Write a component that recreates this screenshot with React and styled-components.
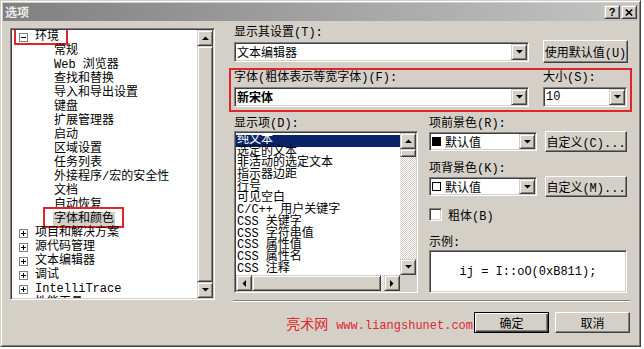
import React from 'react';
import styled, { createGlobalStyle, css } from 'styled-components';

const FACE = '#d4d0c8';
const MARK = '#e0252b';

const GlobalStyle = createGlobalStyle`
  html, body { margin: 0; padding: 0; background: #fff; }
  body {
    font-family: "Liberation Mono", "Noto Sans CJK SC", monospace;
    font-size: 12px;
    color: #000;
  }
  * { box-sizing: border-box; }
`;

const raised = css`
  background: ${FACE};
  border: 1px solid;
  border-color: #fff #404040 #404040 #fff;
  box-shadow: inset -1px -1px #808080;
`;

const scrollRaised = css`
  background: ${FACE};
  border: 1px solid;
  border-color: ${FACE} #404040 #404040 ${FACE};
  box-shadow: inset 1px 1px #fff, inset -1px -1px #808080;
`;

const sunken = css`
  background: #fff;
  border: 1px solid;
  border-color: #808080 #fff #fff #808080;
  box-shadow: inset 1px 1px #404040, inset -1px -1px ${FACE};
  padding: 1px;
`;

const Window = styled.div`
  width: 641px;
  height: 347px;
  background: ${FACE};
  border: 1px solid;
  border-color: ${FACE} #404040 #404040 ${FACE};
  box-shadow: inset 1px 1px #fff, inset -1px -1px #808080;
  padding: 2px;
  display: flex;
  flex-direction: column;
`;

const TitleBar = styled.div`
  height: 18px;
  display: flex;
  align-items: center;
  padding: 0 1px 0 2px;
  background: linear-gradient(to right, #808080, #c4c4c4);
`;

const TitleText = styled.div`
  font-family: "Noto Sans CJK SC", sans-serif;
  font-weight: bold;
  font-size: 12px;
  color: #ececec;
  line-height: 14px;
`;

const TitleButtons = styled.div`
  margin-left: auto;
  display: flex;
  gap: 1px;
`;

const TitleBtn = styled.div`
  ${scrollRaised};
  width: 16px;
  height: 14px;
  display: flex;
  align-items: center;
  justify-content: center;
  font-family: "Liberation Sans", sans-serif;
  font-weight: bold;
  font-size: 11px;
  line-height: 1;
`;

const Body = styled.div`
  display: grid;
  grid-template-columns: 205px 403px;
  column-gap: 14px;
  padding: 6px 0 0 7px;
`;

/* ---- tree ---- */
const TreeBox = styled.div`
  ${sunken};
  margin-top: 1px;
  width: 205px;
  height: 272px;
  display: flex;
`;

const TreeList = styled.div`
  flex: 1;
  overflow: hidden;
`;

const TreeRow = styled.div`
  position: relative;
  height: 14px;
  line-height: 14px;
  display: flex;
  align-items: center;
  white-space: nowrap;
  padding-left: ${p => (p.$child ? '41px' : '7px')};
`;

const ExpandBox = styled.span`
  position: relative;
  flex: none;
  width: 9px;
  height: 9px;
  border: 1px solid #808080;
  background: #fff;
  margin-right: 6px;
  &::before {
    content: '';
    position: absolute;
    left: 1px;
    right: 1px;
    top: 3px;
    height: 1px;
    background: #000;
  }
  &::after {
    content: '';
    display: ${p => (p.$open ? 'none' : 'block')};
    position: absolute;
    top: 1px;
    bottom: 1px;
    left: 3px;
    width: 1px;
    background: #000;
  }
`;

const NodeLabel = styled.span`
  position: relative;
  padding: 0 1px;
  background: ${p => (p.$selected ? FACE : 'transparent')};
`;

const EnvMark = styled.span`
  position: absolute;
  left: 2px;
  top: -2px;
  width: 54px;
  height: 17px;
  border: 2px solid ${MARK};
  pointer-events: none;
`;

const ItemMark = styled.span`
  position: absolute;
  left: -10px;
  top: -5px;
  width: 81px;
  height: 21px;
  border: 2px solid ${MARK};
  pointer-events: none;
`;

/* ---- scrollbars ---- */
const VScroll = styled.div`
  width: 16px;
  flex: none;
  display: flex;
  flex-direction: column;
`;

const HScroll = styled.div`
  height: 16px;
  display: flex;
`;

const ScrollBtn = styled.div`
  ${scrollRaised};
  width: 16px;
  height: 16px;
  flex: none;
  display: flex;
  align-items: center;
  justify-content: center;
`;

const Thumb = styled.div`
  ${scrollRaised};
  flex: ${p => (p.$grow ? '1' : 'none')};
  ${p => p.$size && css`
    height: ${p.$vertical ? `${p.$size}px` : 'auto'};
    width: ${p.$vertical ? 'auto' : `${p.$size}px`};
  `}
`;

const Track = styled.div`
  flex: 1;
  background: repeating-conic-gradient(${FACE} 0 25%, #fff 0 50%) 0 0 / 2px 2px;
`;

const Arrow = ({ dir }) => {
  const horiz = dir === 'left' || dir === 'right';
  const pts = {
    up: '0,4 7,4 3.5,0.5',
    down: '0,0 7,0 3.5,3.5',
    left: '4,0 4,7 0.5,3.5',
    right: '0,0 0,7 3.5,3.5',
  }[dir];
  return (
    <svg width={horiz ? 4 : 7} height={horiz ? 7 : 4} viewBox={horiz ? '0 0 4 7' : '0 0 7 4'}>
      <polygon points={pts} fill="#000" />
    </svg>
  );
};

/* ---- right side ---- */
const RightCol = styled.div`
  display: flex;
  flex-direction: column;
`;

const Label = styled.div`
  height: 13px;
  line-height: 13px;
  white-space: nowrap;
`;

const Section = styled.div`
  padding-left: 5px;
`;

const Row = styled.div`
  display: flex;
  align-items: center;
  height: ${p => p.$h || 21}px;
  gap: ${p => p.$gap || 8}px;
`;

const ComboBox = styled.div`
  ${sunken};
  width: ${p => p.$w}px;
  height: ${p => p.$h}px;
  flex: none;
  display: flex;
`;

const ComboValue = styled.div`
  flex: 1;
  display: flex;
  align-items: center;
  padding-left: 1px;
  white-space: nowrap;
  overflow: hidden;
  font-weight: ${p => (p.$bold ? 'bold' : 'normal')};
`;

const DropBtn = styled(ScrollBtn)`
  height: auto;
`;

const PushButton = styled.div`
  ${raised};
  width: ${p => p.$w}px;
  height: ${p => p.$h}px;
  flex: none;
  display: flex;
  align-items: center;
  justify-content: center;
  white-space: nowrap;
  ${p => p.$default && css`
    border: 1px solid #000;
    box-shadow: inset 1px 1px #fff, inset -1px -1px #404040, inset -2px -2px #808080;
  `}
`;

const RedBox = styled.div`
  margin-top: 5px;
  border: 2px solid ${MARK};
  padding: 2px 3px 3px 3px;
  display: flex;
  gap: 14px;
`;

const FieldCol = styled.div`
  width: ${p => p.$w}px;
  display: flex;
  flex-direction: column;
  gap: 2px;
`;

const Lower = styled.div`
  margin-top: 6px;
  padding-left: 5px;
  display: flex;
  gap: 11px;
`;

const ListCol = styled.div`
  width: 184px;
`;

const ListBox = styled.div`
  ${sunken};
  height: 162px;
  display: grid;
  grid-template-columns: 1fr 16px;
  grid-template-rows: 1fr 16px;
`;

const ListItems = styled.div`
  overflow: hidden;
  padding-top: 2px;
`;

const ListItem = styled.div`
  height: 11.7px;
  line-height: 11.7px;
  padding-left: 1px;
  white-space: nowrap;
  background: ${p => (p.$selected ? '#0a246a' : 'transparent')};
  color: ${p => (p.$selected ? '#fff' : '#000')};
`;

const Corner = styled.div`
  background: ${FACE};
`;

const SideCol = styled.div`
  width: 198px;
  display: flex;
  flex-direction: column;
`;

const Gap = styled.div`
  height: ${p => p.$h}px;
  flex: none;
`;

const Swatch = styled.span`
  flex: none;
  width: 9px;
  height: 9px;
  border: 1px solid #000;
  background: ${p => p.$fill};
  margin-right: 4px;
`;

const CheckRow = styled.div`
  display: flex;
  align-items: center;
  height: 13px;
`;

const CheckBox = styled.span`
  ${sunken};
  width: 13px;
  height: 13px;
  margin-right: 6px;
`;

const SampleBox = styled.div`
  ${sunken};
  height: 43px;
  display: flex;
  align-items: center;
  justify-content: center;
  white-space: pre;
`;

const Separator = styled.div`
  margin: 7px 2px 0 4px;
  height: 2px;
  border-top: 1px solid #808080;
  border-bottom: 1px solid #fff;
`;

const Footer = styled.div`
  grid-column: 1 / -1;
  margin-top: 10px;
  padding-right: 2px;
  display: flex;
  align-items: center;
  justify-content: flex-end;
`;

const Watermark = styled.div`
  color: #e3262b;
  display: flex;
  align-items: baseline;
  margin-right: 1px;
  white-space: nowrap;
`;

const WmCn = styled.span`
  font-family: "Noto Sans CJK SC", sans-serif;
  font-size: 14px;
  margin-right: 8px;
`;

const WmUrl = styled.span`
  font-family: "Liberation Mono", monospace;
  font-size: 12px;
`;

const Buttons = styled.div`
  display: flex;
  gap: 6px;
`;

const envChildren = [
  '常规', 'Web 浏览器', '查找和替换', '导入和导出设置', '键盘', '扩展管理器', '启动',
  '区域设置', '任务列表', '外接程序/宏的安全性', '文档', '自动恢复', '字体和颜色',
];
const topItems = ['项目和解决方案', '源代码管理', '文本编辑器', '调试', 'IntelliTrace', '性能工具'];
const displayItems = [
  '纯文本', '选定的文本', '非活动的选定文本', '指示器边距', '行号', '可见空白',
  'C/C++ 用户关键字', 'CSS 关键字', 'CSS 字符串值', 'CSS 属性值', 'CSS 属性名', 'CSS 注释',
];

const Combo = ({ w, h, bold, children }) => (
  <ComboBox $w={w} $h={h}>
    <ComboValue $bold={bold}>{children}</ComboValue>
    <DropBtn><Arrow dir="down" /></DropBtn>
  </ComboBox>
);

const App = () => (
  <>
    <GlobalStyle />
    <Window>
      <TitleBar>
        <TitleText>选项</TitleText>
        <TitleButtons>
          <TitleBtn>?</TitleBtn>
          <TitleBtn>
            <svg width="8" height="7" viewBox="0 0 8 7">
              <path d="M0.8 0.5 L7.2 6.5 M7.2 0.5 L0.8 6.5" stroke="#000" strokeWidth="1.6" />
            </svg>
          </TitleBtn>
        </TitleButtons>
      </TitleBar>

      <Body>
        <TreeBox>
          <TreeList>
            <TreeRow>
              <EnvMark />
              <ExpandBox $open />
              <NodeLabel>环境</NodeLabel>
            </TreeRow>
            {envChildren.map((c, i) => (
              <TreeRow $child key={c}>
                <NodeLabel $selected={i === envChildren.length - 1}>
                  {c}
                  {i === envChildren.length - 1 && <ItemMark />}
                </NodeLabel>
              </TreeRow>
            ))}
            {topItems.map(t => (
              <TreeRow key={t}>
                <ExpandBox />
                <NodeLabel>{t}</NodeLabel>
              </TreeRow>
            ))}
          </TreeList>
          <VScroll>
            <ScrollBtn><Arrow dir="up" /></ScrollBtn>
            <Thumb $grow />
            <ScrollBtn><Arrow dir="down" /></ScrollBtn>
          </VScroll>
        </TreeBox>

        <RightCol>
          <Section>
            <Label>显示其设置(T):</Label>
            <Row $h={23} $gap={14}>
              <Combo w={295} h={20}>文本编辑器</Combo>
              <PushButton $w={85} $h={23}>使用默认值(U)</PushButton>
            </Row>
          </Section>

          <RedBox>
            <FieldCol $w={295}>
              <Label>字体(粗体表示等宽字体)(F):</Label>
              <Combo w={295} h={20} bold>新宋体</Combo>
            </FieldCol>
            <FieldCol $w={84}>
              <Label>大小(S):</Label>
              <Combo w={84} h={20}>10</Combo>
            </FieldCol>
          </RedBox>

          <Lower>
            <ListCol>
              <Label>显示项(D):</Label>
              <ListBox>
                <ListItems>
                  {displayItems.map((d, i) => (
                    <ListItem key={d} $selected={i === 0}>{d}</ListItem>
                  ))}
                </ListItems>
                <VScroll>
                  <ScrollBtn><Arrow dir="up" /></ScrollBtn>
                  <Thumb $vertical $size={8} />
                  <Track />
                  <ScrollBtn><Arrow dir="down" /></ScrollBtn>
                </VScroll>
                <HScroll>
                  <ScrollBtn><Arrow dir="left" /></ScrollBtn>
                  <Thumb $size={129} />
                  <Track />
                  <ScrollBtn><Arrow dir="right" /></ScrollBtn>
                </HScroll>
                <Corner />
              </ListBox>
            </ListCol>

            <SideCol>
              <Label>项前景色(R):</Label>
              <Row>
                <Combo w={108} h={19}><Swatch $fill="#000" />默认值</Combo>
                <PushButton $w={82} $h={21}>自定义(C)...</PushButton>
              </Row>
              <Gap $h={11} />
              <Label>项背景色(K):</Label>
              <Row>
                <Combo w={108} h={19}><Swatch $fill="#fff" />默认值</Combo>
                <PushButton $w={82} $h={21}>自定义(M)...</PushButton>
              </Row>
              <Gap $h={11} />
              <CheckRow>
                <CheckBox />
                粗体(B)
              </CheckRow>
              <Gap $h={16} />
              <Label>示例:</Label>
              <SampleBox>ij = I::oO(0xB811);</SampleBox>
            </SideCol>
          </Lower>

          <Separator />
        </RightCol>

        <Footer>
          <Watermark>
            <WmCn>亮术网</WmCn>
            <WmUrl>www.liangshunet.com</WmUrl>
          </Watermark>
          <Buttons>
            <PushButton $w={75} $h={21} $default>确定</PushButton>
            <PushButton $w={75} $h={21}>取消</PushButton>
          </Buttons>
        </Footer>
      </Body>
    </Window>
  </>
);

export default App;
